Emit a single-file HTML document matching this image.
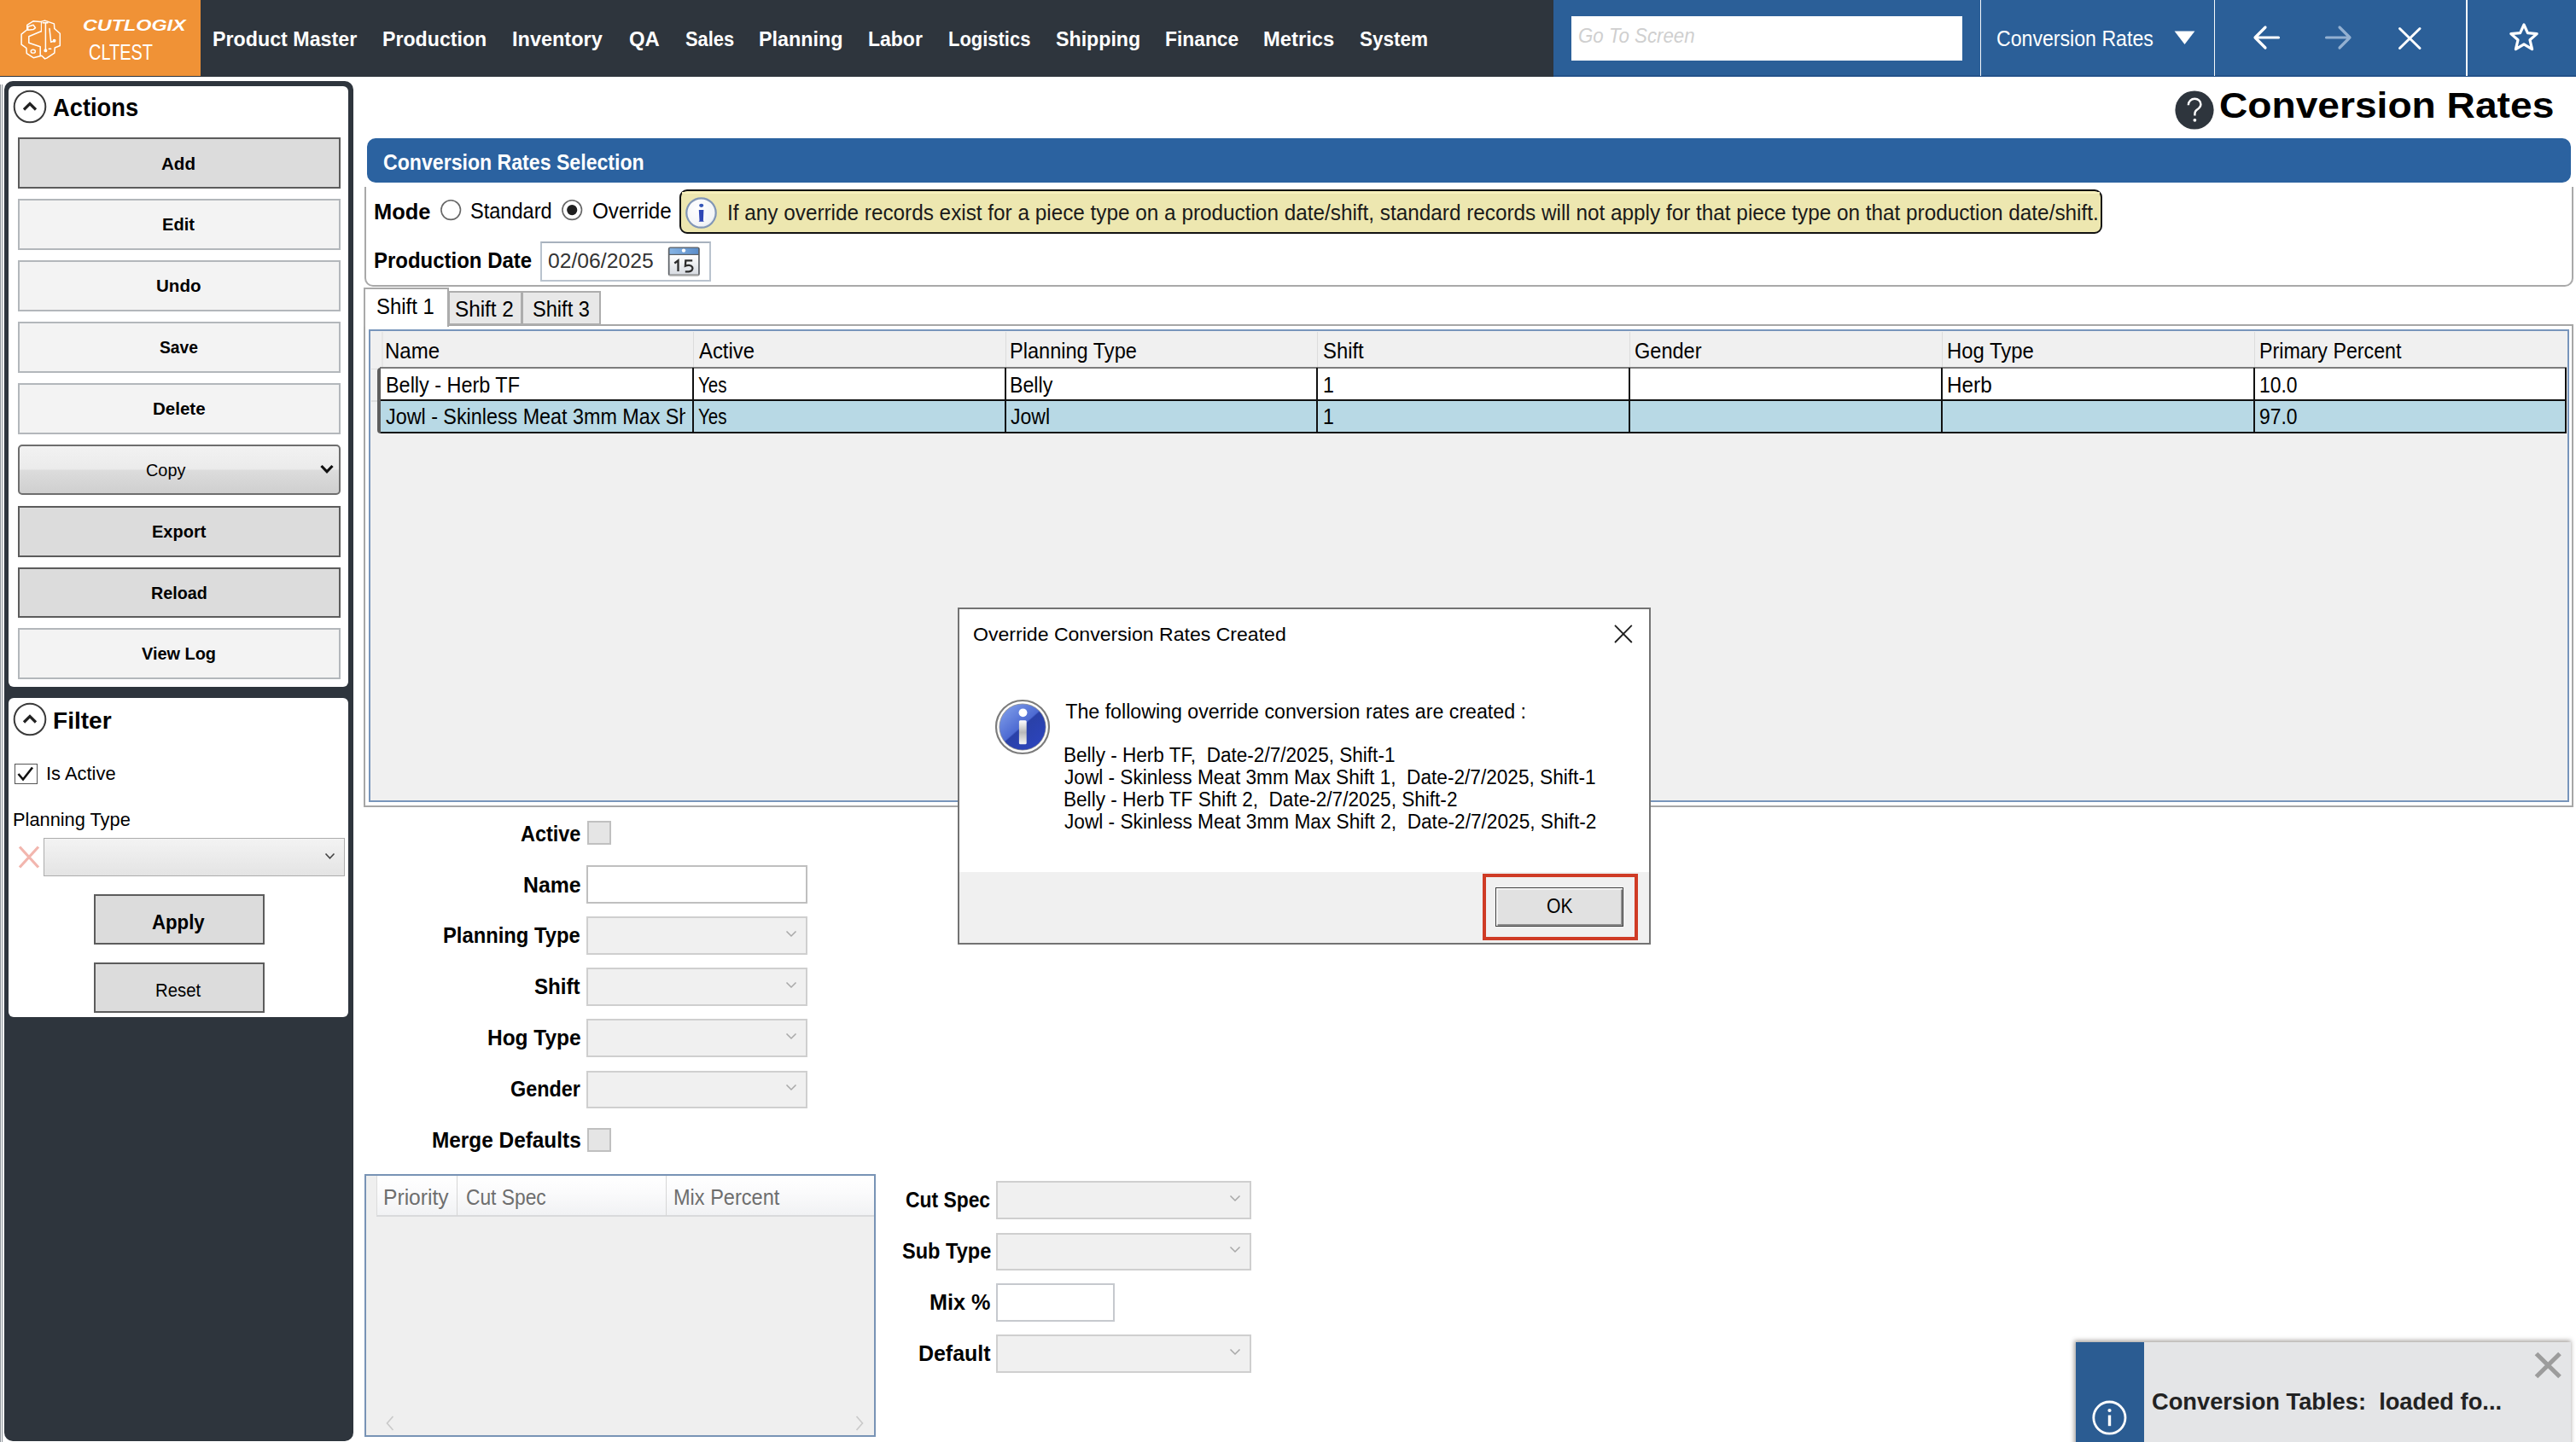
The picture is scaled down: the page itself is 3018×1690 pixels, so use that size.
<!DOCTYPE html>
<html><head><meta charset="utf-8"><title>Conversion Rates</title>
<style>
html,body{margin:0;padding:0;background:#fff;width:3018px;height:1690px;overflow:hidden;}
body{position:relative;font-family:"Liberation Sans",sans-serif;}
body>div,body>svg,div>div{position:absolute;}
.t{white-space:pre;transform-origin:0 0;}
</style></head><body>
<div style="left:0.00px;top:0.00px;width:3018.00px;height:90.00px;background:#2e353d;"></div>
<div style="left:0.00px;top:0.00px;width:235.00px;height:88.60px;background:#f09236;"></div>
<div style="left:1820.00px;top:0.00px;width:1198.00px;height:90.00px;background:#2b5f98;"></div>
<div style="left:1820.00px;top:88.30px;width:1198.00px;height:1.70px;background:#24528a;"></div>
<div style="left:1841.00px;top:19.00px;width:458.00px;height:51.50px;background:#fff;"></div>
<div style="left:2319.65px;top:0.00px;width:1.70px;height:88.50px;background:#f4f7fb;"></div>
<div style="left:2593.75px;top:0.00px;width:1.70px;height:88.50px;background:#f4f7fb;"></div>
<div style="left:2889.15px;top:0.00px;width:1.70px;height:88.50px;background:#f4f7fb;"></div>
<svg style="left:18px;top:16px" width="64" height="60" viewBox="0 0 64 60" fill="none" stroke="#fff" stroke-width="1.5" stroke-linejoin="round" stroke-linecap="round">
<path d="M21.2 8.7 L29.1 9.6 L34.5 8.1 L45.4 11.9 L45.8 17.5 L52.3 23.3 L52.3 37.5 L46.2 40 L45.8 46.2 L36.7 52.1 L34.6 52.9 L30.8 49.2 L21.2 51.7 L13.3 46.7 L12.9 40.4 L7.1 36.2 L7.1 24.2 L13.75 18.75 L13.75 13.3 Z"/>
<path d="M30 20.8 L15.8 26.7 L15.8 34.2 L29.2 38.75 L29.2 48.75"/>
<path d="M14.6 19.2 L14.8 15.2 L21 13.2 L23.5 16.6 L21.3 18.4 Z" fill="none" stroke-width="1.5"/>
<ellipse cx="20.8" cy="44.2" rx="2.6" ry="1.9" fill="none" stroke-width="1.4"/>
<path d="M35.4 10.8 L35.4 43.3 M32.1 10.8 L37.9 10.8"/>
<circle cx="35.4" cy="43.3" r="1.3" fill="#fff"/>
<path d="M30.4 10 L30.4 21" stroke-width="1.1"/>
<path d="M40 17.5 L41.7 33.3 L45.8 32.1"/>
<circle cx="45.6" cy="31.8" r="1.2" fill="#fff"/>
<path d="M39.2 41.25 L41.7 41.25"/>
</svg>
<div class="t" style="left:97.43px;top:21.00px;font-size:18.406px;line-height:18.406px;color:#fff;font-weight:bold;font-style:italic;transform:scaleX(1.2695);">CUTLOGIX</div>
<div class="t" style="left:103.92px;top:49.00px;font-size:25.652px;line-height:25.652px;color:#fff;transform:scaleX(0.7779);">CLTEST</div>
<div class="t" style="left:248.91px;top:34.00px;font-size:24.638px;line-height:24.638px;color:#fff;font-weight:bold;transform:scaleX(0.9441);">Product Master</div>
<div class="t" style="left:447.92px;top:34.00px;font-size:24.638px;line-height:24.638px;color:#fff;font-weight:bold;transform:scaleX(0.9409);">Production</div>
<div class="t" style="left:600.09px;top:34.00px;font-size:24.638px;line-height:24.638px;color:#fff;font-weight:bold;transform:scaleX(0.9541);">Inventory</div>
<div class="t" style="left:737.13px;top:34.00px;font-size:24.638px;line-height:24.638px;color:#fff;font-weight:bold;transform:scaleX(0.9686);">QA</div>
<div class="t" style="left:802.71px;top:34.00px;font-size:24.638px;line-height:24.638px;color:#fff;font-weight:bold;transform:scaleX(0.8889);">Sales</div>
<div class="t" style="left:889.10px;top:34.00px;font-size:24.638px;line-height:24.638px;color:#fff;font-weight:bold;transform:scaleX(0.9475);">Planning</div>
<div class="t" style="left:1016.83px;top:34.00px;font-size:24.638px;line-height:24.638px;color:#fff;font-weight:bold;transform:scaleX(0.9333);">Labor</div>
<div class="t" style="left:1111.12px;top:34.00px;font-size:24.638px;line-height:24.638px;color:#fff;font-weight:bold;transform:scaleX(0.8914);">Logistics</div>
<div class="t" style="left:1237.06px;top:34.00px;font-size:24.638px;line-height:24.638px;color:#fff;font-weight:bold;transform:scaleX(0.9417);">Shipping</div>
<div class="t" style="left:1364.75px;top:34.00px;font-size:24.638px;line-height:24.638px;color:#fff;font-weight:bold;transform:scaleX(0.9267);">Finance</div>
<div class="t" style="left:1480.07px;top:34.00px;font-size:24.638px;line-height:24.638px;color:#fff;font-weight:bold;transform:scaleX(0.9651);">Metrics</div>
<div class="t" style="left:1592.79px;top:34.00px;font-size:24.638px;line-height:24.638px;color:#fff;font-weight:bold;transform:scaleX(0.9129);">System</div>
<div class="t" style="left:1848.78px;top:30.00px;font-size:24.348px;line-height:24.348px;color:#cfcfcf;font-style:italic;transform:scaleX(0.9156);">Go To Screen</div>
<div class="t" style="left:2338.59px;top:33.00px;font-size:25.507px;line-height:25.507px;color:#fff;transform:scaleX(0.9070);">Conversion Rates</div>
<svg style="left:2547px;top:36px" width="26" height="17" viewBox="0 0 26 17"><path d="M0.6 0.6 L24.4 0.6 L12.5 16 Z" fill="#fff"/></svg>
<svg style="left:2636px;top:26px" width="40" height="36" viewBox="0 0 40 36" fill="none" stroke="#fff" stroke-width="3.2" stroke-linecap="round" stroke-linejoin="round">
<path d="M33.5 18 L6.5 18 M18 6 L6 18 L18 30"/></svg>
<svg style="left:2720px;top:26px" width="40" height="36" viewBox="0 0 40 36" fill="none" stroke="#93b0d1" stroke-width="3.2" stroke-linecap="round" stroke-linejoin="round">
<path d="M5.5 18 L33 18 M21 6 L33 18 L21 30"/></svg>
<svg style="left:2806px;top:28px" width="34" height="34" viewBox="0 0 34 34" fill="none" stroke="#fff" stroke-width="3.0" stroke-linecap="round">
<path d="M5.5 5.5 L29 28.5 M29 5.5 L5.5 28.5"/></svg>
<svg style="left:2934px;top:22px" width="46" height="42" viewBox="0 0 46 42" fill="none" stroke="#fff" stroke-width="3.2" stroke-linejoin="round">
<path d="M23 7 L27.4 16.6 L38.2 17.6 L30 24.8 L32.6 35.6 L23 29.8 L13.4 35.6 L16 24.8 L7.8 17.6 L18.6 16.6 Z"/></svg>
<div style="left:0.00px;top:99.00px;width:1.00px;height:1591.00px;background:#8d9399;"></div>
<div style="left:2.00px;top:99.00px;width:1.00px;height:1591.00px;background:#8d9399;"></div>
<div style="left:4.70px;top:94.60px;width:409.30px;height:1594.90px;background:#2e353d;border-radius:10px;"></div>
<div style="left:10.40px;top:100.50px;width:397.80px;height:704.50px;background:#fff;border-radius:6px;"></div>
<div style="left:10.40px;top:818.00px;width:397.80px;height:374.00px;background:#fff;border-radius:6px;"></div>
<svg style="left:13.3px;top:103.2px" width="44" height="44" viewBox="0 0 44 44" fill="none">
<circle cx="22" cy="22" r="18.3" stroke="#3a3a3a" stroke-width="2"/>
<path d="M15 25.5 L22 18.5 L29 25.5" stroke="#222" stroke-width="3.2" stroke-linejoin="miter"/></svg>
<div class="t" style="left:62.06px;top:112.00px;font-size:28.986px;line-height:28.986px;color:#000;font-weight:bold;transform:scaleX(0.9423);">Actions</div>
<div style="left:20.80px;top:161.00px;width:377.80px;height:59.50px;background:#dcdcdc;border:2px solid #5c5c5c;box-sizing:border-box;"></div>
<div class="t" style="left:189.49px;top:182.00px;font-size:20.290px;line-height:20.290px;color:#000;font-weight:bold;transform:scaleX(1.0135);">Add</div>
<div style="left:20.80px;top:233.00px;width:377.80px;height:59.50px;background:#f3f3f3;border:2px solid #b3b7bb;box-sizing:border-box;"></div>
<div class="t" style="left:190.41px;top:253.00px;font-size:20.290px;line-height:20.290px;color:#000;font-weight:bold;transform:scaleX(0.9892);">Edit</div>
<div style="left:20.80px;top:305.00px;width:377.80px;height:59.50px;background:#f3f3f3;border:2px solid #b3b7bb;box-sizing:border-box;"></div>
<div class="t" style="left:183.29px;top:325.00px;font-size:20.290px;line-height:20.290px;color:#000;font-weight:bold;transform:scaleX(1.0140);">Undo</div>
<div style="left:20.80px;top:377.00px;width:377.80px;height:59.50px;background:#f3f3f3;border:2px solid #b3b7bb;box-sizing:border-box;"></div>
<div class="t" style="left:186.85px;top:397.00px;font-size:20.290px;line-height:20.290px;color:#000;font-weight:bold;transform:scaleX(0.9500);">Save</div>
<div style="left:20.80px;top:449.00px;width:377.80px;height:59.50px;background:#f3f3f3;border:2px solid #b3b7bb;box-sizing:border-box;"></div>
<div class="t" style="left:178.99px;top:469.00px;font-size:20.290px;line-height:20.290px;color:#000;font-weight:bold;transform:scaleX(1.0119);">Delete</div>
<div style="left:20.80px;top:593.00px;width:377.80px;height:59.50px;background:#dcdcdc;border:2px solid #5c5c5c;box-sizing:border-box;"></div>
<div class="t" style="left:177.61px;top:613.00px;font-size:20.290px;line-height:20.290px;color:#000;font-weight:bold;transform:scaleX(0.9857);">Export</div>
<div style="left:20.80px;top:665.00px;width:377.80px;height:58.50px;background:#dcdcdc;border:2px solid #5c5c5c;box-sizing:border-box;"></div>
<div class="t" style="left:176.53px;top:685.00px;font-size:20.290px;line-height:20.290px;color:#000;font-weight:bold;transform:scaleX(0.9723);">Reload</div>
<div style="left:20.80px;top:736.00px;width:377.80px;height:59.50px;background:#f3f3f3;border:2px solid #b3b7bb;box-sizing:border-box;"></div>
<div class="t" style="left:166.40px;top:756.00px;font-size:20.290px;line-height:20.290px;color:#000;font-weight:bold;transform:scaleX(0.9816);">View Log</div>
<div style="left:20.80px;top:520.50px;width:377.80px;height:59.50px;border:2px solid #6e6e6e;box-sizing:border-box;border-radius:5px;background:linear-gradient(#f2f2f2 0%,#ebebeb 48%,#dcdcdc 52%,#cfcfcf 100%);"></div>
<div class="t" style="left:170.99px;top:542.00px;font-size:19.710px;line-height:19.710px;color:#000;transform:scaleX(1.0089);">Copy</div>
<svg style="left:375px;top:544px" width="16" height="12" viewBox="0 0 16 12"><path d="M1.5 2 L8 8.8 L14.5 2" fill="none" stroke="#111" stroke-width="3.2"/></svg>
<svg style="left:13.3px;top:821.0px" width="44" height="44" viewBox="0 0 44 44" fill="none">
<circle cx="22" cy="22" r="18.3" stroke="#3a3a3a" stroke-width="2"/>
<path d="M15 25.5 L22 18.5 L29 25.5" stroke="#222" stroke-width="3.2" stroke-linejoin="miter"/></svg>
<div class="t" style="left:61.79px;top:831.00px;font-size:27.971px;line-height:27.971px;color:#000;font-weight:bold;transform:scaleX(1.0030);">Filter</div>
<div style="left:16.60px;top:895.00px;width:27.20px;height:24.40px;background:#fff;border:1.6px solid #555;box-sizing:border-box;"></div>
<svg style="left:16px;top:894px" width="28" height="26" viewBox="0 0 28 26"><path d="M5.5 13 L11 19.5 L22 5.5" fill="none" stroke="#111" stroke-width="2.6"/></svg>
<div class="t" style="left:53.52px;top:896.00px;font-size:22.174px;line-height:22.174px;color:#000;transform:scaleX(0.9887);">Is Active</div>
<div class="t" style="left:15.23px;top:950.00px;font-size:22.174px;line-height:22.174px;color:#000;transform:scaleX(0.9839);">Planning Type</div>
<svg style="left:21px;top:990px" width="26" height="29" viewBox="0 0 26 29"><path d="M2 2.5 L24 26.5 M24 2.5 L2 26.5" stroke="#f2b6ae" stroke-width="3.2"/></svg>
<div style="left:50.80px;top:982.30px;width:353.20px;height:44.70px;border:1.6px solid #adadad;box-sizing:border-box;background:linear-gradient(#f3f3f3,#e4e4e4);"></div>
<svg style="left:380px;top:999px" width="13" height="9" viewBox="0 0 13 9"><path d="M1.5 1.5 L6.5 6.8 L11.5 1.5" fill="none" stroke="#444" stroke-width="1.6"/></svg>
<div style="left:110.40px;top:1048.00px;width:199.60px;height:59.00px;background:#dcdcdc;border:2px solid #5c5c5c;box-sizing:border-box;"></div>
<div class="t" style="left:178.08px;top:1069.00px;font-size:24.058px;line-height:24.058px;color:#000;font-weight:bold;transform:scaleX(0.9242);">Apply</div>
<div style="left:110.40px;top:1128.00px;width:199.60px;height:59.00px;background:#dcdcdc;border:2px solid #5c5c5c;box-sizing:border-box;"></div>
<div class="t" style="left:181.92px;top:1149.00px;font-size:22.899px;line-height:22.899px;color:#000;transform:scaleX(0.8897);">Reset</div>
<svg style="left:2548px;top:105.5px" width="46" height="46" viewBox="0 0 46 46">
<circle cx="23" cy="23" r="22.6" fill="#2e353d"/>
<path d="M15.8 17.2 C15.8 12.6 19.2 9.8 23.3 9.8 C27.4 9.8 30.4 12.6 30.4 16.3 C30.4 19.6 28.3 21 26 22.6 C24.1 23.9 23.4 25 23.4 27.6 L23.4 29.6" fill="none" stroke="#fff" stroke-width="2.4"/>
<circle cx="23.4" cy="34.8" r="1.9" fill="#fff"/></svg>
<div class="t" style="left:2600.43px;top:103.00px;font-size:42.464px;line-height:42.464px;color:#000;font-weight:bold;transform:scaleX(1.0868);">Conversion Rates</div>
<div style="left:430.00px;top:162.30px;width:2582.00px;height:51.60px;background:#2b62a0;border-radius:10px;"></div>
<div class="t" style="left:449.11px;top:177.00px;font-size:26.087px;line-height:26.087px;color:#fff;font-weight:bold;transform:scaleX(0.8863);">Conversion Rates Selection</div>
<div style="left:426.80px;top:214.00px;width:2588.40px;height:122.20px;border-left:2px solid #a9a9a9;border-right:2px solid #a9a9a9;border-bottom:2px solid #a9a9a9;border-radius:0 0 10px 10px;box-sizing:border-box;"></div>
<div style="left:426.00px;top:214.00px;width:2590.00px;height:4.50px;background:#fff;"></div>
<div class="t" style="left:437.65px;top:235.00px;font-size:26.087px;line-height:26.087px;color:#000;font-weight:bold;transform:scaleX(0.9754);">Mode</div>
<svg style="left:514px;top:232px" width="180" height="28" viewBox="0 0 180 28" fill="none">
<circle cx="14.2" cy="14.1" r="11.3" stroke="#666" stroke-width="1.6" fill="#fff"/>
<circle cx="156.2" cy="14.1" r="11.3" stroke="#666" stroke-width="1.6" fill="#fff"/>
<circle cx="156.2" cy="14.1" r="6.1" fill="#1e1e1e"/></svg>
<div class="t" style="left:551.08px;top:235.00px;font-size:25.652px;line-height:25.652px;color:#000;transform:scaleX(0.9186);">Standard</div>
<div class="t" style="left:694.06px;top:235.00px;font-size:25.652px;line-height:25.652px;color:#000;transform:scaleX(0.9427);">Override</div>
<div style="left:796.00px;top:222.40px;width:1667.40px;height:51.60px;background:#ede7b0;border:2px solid #111;box-sizing:border-box;border-radius:9px;"></div>
<div style="left:799.00px;top:225.00px;width:1661.40px;height:1.50px;background:#f8f1bd;"></div>
<svg style="left:801px;top:229px" width="40" height="40" viewBox="0 0 40 40">
<defs><radialGradient id="ig" cx="0.4" cy="0.35" r="0.7"><stop offset="0" stop-color="#ffffff"/><stop offset="0.8" stop-color="#f3f5f8"/><stop offset="1" stop-color="#dfe5ee"/></radialGradient></defs>
<circle cx="20.5" cy="20.5" r="17.2" fill="url(#ig)" stroke="#8196b6" stroke-width="2.2"/>
<ellipse cx="20.7" cy="11.8" rx="2.6" ry="2.1" fill="#3556b8"/>
<path d="M17.8 17 L23.4 17 L22.9 29.6 L23.8 30.8 L17.6 30.8 L18.5 29.6 Z" fill="#2f47b5"/></svg>
<div class="t" style="left:851.54px;top:236.00px;font-size:26.087px;line-height:26.087px;color:#1a1a1a;transform:scaleX(0.9322);">If any override records exist for a piece type on a production date/shift, standard records will not apply for that piece type on that production date/shift.</div>
<div class="t" style="left:437.71px;top:293.00px;font-size:25.362px;line-height:25.362px;color:#000;font-weight:bold;transform:scaleX(0.9451);">Production Date</div>
<div style="left:632.80px;top:283.00px;width:199.80px;height:46.80px;background:#fff;border:2px solid #b9c3ce;border-top-color:#a7b1bd;box-sizing:border-box;"></div>
<div class="t" style="left:642.40px;top:294.00px;font-size:24.638px;line-height:24.638px;color:#333;transform:scaleX(1.0033);">02/06/2025</div>
<svg style="left:781px;top:288px" width="41" height="38" viewBox="0 0 41 38">
<defs><linearGradient id="cb" x1="0" y1="0" x2="1" y2="0"><stop offset="0" stop-color="#86b4e4"/><stop offset="1" stop-color="#5b8dca"/></linearGradient>
<linearGradient id="cw" x1="0" y1="0" x2="0" y2="1"><stop offset="0" stop-color="#ffffff"/><stop offset="1" stop-color="#d8dce2"/></linearGradient></defs>
<rect x="1.8" y="1.6" width="37" height="33.6" rx="2.5" fill="#5b5f64"/>
<rect x="3.5" y="2.8" width="33.6" height="7" fill="url(#cb)"/>
<rect x="3.5" y="11" width="33.6" height="22.6" fill="url(#cw)"/>
<rect x="3" y="33.6" width="34.6" height="1.8" fill="#a5a5a5"/>
<circle cx="20" cy="5.6" r="2.2" fill="#fff"/>
<path d="M9.3 20.5 L13.5 17.3 L13.5 30" fill="none" stroke="#2d2d2d" stroke-width="2.3"/>
<path d="M30.2 17.4 L22.3 17.4 L21.9 23.6 C24.5 22.4 28.8 22.3 30.2 25.2 C31.4 28.1 28.6 30.5 25.5 30.3 L21.8 30.3" fill="none" stroke="#2d2d2d" stroke-width="2.3"/></svg>
<div style="left:426.40px;top:380.40px;width:2589.00px;height:565.60px;background:#fff;border:2px solid #a6a6a6;box-sizing:border-box;"></div>
<div style="left:426.40px;top:336.60px;width:99.40px;height:46.40px;background:#fff;border:2px solid #a9a9a9;border-bottom:none;box-sizing:border-box;"></div>
<div style="left:525.20px;top:340.60px;width:86.60px;height:40.80px;background:#e8e8e8;border:2px solid #adadad;box-sizing:border-box;"></div>
<div style="left:611.40px;top:340.60px;width:92.60px;height:40.80px;background:#e8e8e8;border:2px solid #adadad;box-sizing:border-box;"></div>
<div class="t" style="left:440.75px;top:347.00px;font-size:25.217px;line-height:25.217px;color:#000;transform:scaleX(0.9471);">Shift 1</div>
<div class="t" style="left:532.54px;top:350.00px;font-size:25.217px;line-height:25.217px;color:#000;transform:scaleX(0.9638);">Shift 2</div>
<div class="t" style="left:624.46px;top:350.00px;font-size:25.217px;line-height:25.217px;color:#000;transform:scaleX(0.9357);">Shift 3</div>
<div style="left:432.40px;top:386.40px;width:2577.20px;height:553.40px;background:#f0f0f0;border:2px solid #7895bb;box-sizing:border-box;"></div>
<div style="left:447.40px;top:389.00px;width:1.20px;height:41.00px;background:#e6e6e6;"></div>
<div style="left:435.00px;top:432.00px;width:7.40px;height:1.40px;background:#dedede;"></div>
<div style="left:435.00px;top:469.20px;width:7.40px;height:1.40px;background:#dedede;"></div>
<div style="left:811.70px;top:389.00px;width:1.20px;height:41.00px;background:#dcdcdc;"></div>
<div style="left:1177.50px;top:389.00px;width:1.20px;height:41.00px;background:#dcdcdc;"></div>
<div style="left:1543.30px;top:389.00px;width:1.20px;height:41.00px;background:#dcdcdc;"></div>
<div style="left:1909.10px;top:389.00px;width:1.20px;height:41.00px;background:#dcdcdc;"></div>
<div style="left:2274.90px;top:389.00px;width:1.20px;height:41.00px;background:#dcdcdc;"></div>
<div style="left:2640.70px;top:389.00px;width:1.20px;height:41.00px;background:#dcdcdc;"></div>
<div style="left:445.00px;top:429.60px;width:2561.60px;height:2.20px;background:#7c7c7c;"></div>
<div style="left:445.00px;top:431.50px;width:2561.00px;height:38.00px;background:#fff;"></div>
<div style="left:445.00px;top:469.50px;width:2561.00px;height:37.50px;background:#b8d9e5;"></div>
<div style="left:444.80px;top:468.20px;width:2561.80px;height:2.20px;background:#111;"></div>
<div style="left:444.80px;top:506.00px;width:2561.80px;height:2.40px;background:#111;"></div>
<div style="left:442.40px;top:430.60px;width:3.60px;height:77.60px;background:#5e5e5e;border-radius:4px 0 0 4px;"></div>
<div style="left:810.70px;top:431.00px;width:2.20px;height:76.00px;background:#111;"></div>
<div style="left:1176.50px;top:431.00px;width:2.20px;height:76.00px;background:#111;"></div>
<div style="left:1542.30px;top:431.00px;width:2.20px;height:76.00px;background:#111;"></div>
<div style="left:1908.10px;top:431.00px;width:2.20px;height:76.00px;background:#111;"></div>
<div style="left:2273.90px;top:431.00px;width:2.20px;height:76.00px;background:#111;"></div>
<div style="left:2639.70px;top:431.00px;width:2.20px;height:76.00px;background:#111;"></div>
<div style="left:3004.60px;top:431.00px;width:2.20px;height:77.00px;background:#111;"></div>
<div class="t" style="left:451.48px;top:399.00px;font-size:25.072px;line-height:25.072px;color:#000;transform:scaleX(0.9578);">Name</div>
<div class="t" style="left:818.60px;top:399.00px;font-size:25.072px;line-height:25.072px;color:#000;transform:scaleX(0.9507);">Active</div>
<div class="t" style="left:1183.22px;top:399.00px;font-size:25.072px;line-height:25.072px;color:#000;transform:scaleX(0.9397);">Planning Type</div>
<div class="t" style="left:1549.95px;top:399.00px;font-size:25.072px;line-height:25.072px;color:#000;transform:scaleX(0.9510);">Shift</div>
<div class="t" style="left:1915.46px;top:399.00px;font-size:25.072px;line-height:25.072px;color:#000;transform:scaleX(0.9390);">Gender</div>
<div class="t" style="left:2281.39px;top:399.00px;font-size:25.072px;line-height:25.072px;color:#000;transform:scaleX(0.9529);">Hog Type</div>
<div class="t" style="left:2646.55px;top:399.00px;font-size:25.072px;line-height:25.072px;color:#000;transform:scaleX(0.9264);">Primary Percent</div>
<div class="t" style="left:451.53px;top:439.00px;font-size:25.072px;line-height:25.072px;color:#000;transform:scaleX(0.9339);">Belly - Herb TF</div>
<div class="t" style="left:818.48px;top:439.00px;font-size:25.072px;line-height:25.072px;color:#000;transform:scaleX(0.8205);">Yes</div>
<div class="t" style="left:1183.25px;top:439.00px;font-size:25.072px;line-height:25.072px;color:#000;transform:scaleX(0.9250);">Belly</div>
<div class="t" style="left:1549.96px;top:439.00px;font-size:25.072px;line-height:25.072px;color:#000;transform:scaleX(0.9221);">1</div>
<div class="t" style="left:2281.36px;top:439.00px;font-size:25.072px;line-height:25.072px;color:#000;transform:scaleX(0.9692);">Herb</div>
<div class="t" style="left:2647.47px;top:439.00px;font-size:25.072px;line-height:25.072px;color:#000;transform:scaleX(0.9130);">10.0</div>
<div style="left:452.47px;top:476.00px;width:351.00px;height:27.58px;overflow:hidden"><div class="t" style="left:0.00px;top:0;font-size:25.072px;line-height:25.072px;color:#000;transform:scaleX(0.9304)">Jowl - Skinless Meat 3mm Max Shift 1</div></div>
<div class="t" style="left:818.48px;top:476.00px;font-size:25.072px;line-height:25.072px;color:#000;transform:scaleX(0.8205);">Yes</div>
<div class="t" style="left:1183.58px;top:476.00px;font-size:25.072px;line-height:25.072px;color:#000;transform:scaleX(0.9188);">Jowl</div>
<div class="t" style="left:1549.96px;top:476.00px;font-size:25.072px;line-height:25.072px;color:#000;transform:scaleX(0.9221);">1</div>
<div class="t" style="left:2647.49px;top:476.00px;font-size:25.072px;line-height:25.072px;color:#000;transform:scaleX(0.9128);">97.0</div>
<div class="t" style="left:609.78px;top:965.00px;font-size:25.507px;line-height:25.507px;color:#000;font-weight:bold;transform:scaleX(0.9200);">Active</div>
<div class="t" style="left:612.66px;top:1025.00px;font-size:25.507px;line-height:25.507px;color:#000;font-weight:bold;transform:scaleX(0.9716);">Name</div>
<div class="t" style="left:519.34px;top:1084.00px;font-size:25.507px;line-height:25.507px;color:#000;font-weight:bold;transform:scaleX(0.9324);">Planning Type</div>
<div class="t" style="left:625.75px;top:1144.00px;font-size:25.507px;line-height:25.507px;color:#000;font-weight:bold;transform:scaleX(0.9464);">Shift</div>
<div class="t" style="left:571.28px;top:1204.00px;font-size:25.507px;line-height:25.507px;color:#000;font-weight:bold;transform:scaleX(0.9595);">Hog Type</div>
<div class="t" style="left:598.08px;top:1264.00px;font-size:25.507px;line-height:25.507px;color:#000;font-weight:bold;transform:scaleX(0.9170);">Gender</div>
<div class="t" style="left:505.79px;top:1324.00px;font-size:25.507px;line-height:25.507px;color:#000;font-weight:bold;transform:scaleX(0.9556);">Merge Defaults</div>
<div style="left:688.40px;top:962.20px;width:27.80px;height:27.80px;background:#e5e5e5;border:2px solid #c0c0c0;box-sizing:border-box;"></div>
<div style="left:686.70px;top:1014.00px;width:259.30px;height:45.00px;background:#fff;border:2px solid #bfbfbf;box-sizing:border-box;"></div>
<div style="left:686.60px;top:1074.10px;width:259.20px;height:45.20px;background:#f0f0f0;border:2px solid #cfcfcf;box-sizing:border-box;"></div>
<svg style="left:919.8px;top:1089.7px" width="14" height="9" viewBox="0 0 14 9"><path d="M1.5 1.5 L7 7 L12.5 1.5" fill="none" stroke="#a8a8a8" stroke-width="1.5"/></svg>
<div style="left:686.60px;top:1134.30px;width:259.20px;height:44.90px;background:#f0f0f0;border:2px solid #cfcfcf;box-sizing:border-box;"></div>
<svg style="left:919.8px;top:1149.8px" width="14" height="9" viewBox="0 0 14 9"><path d="M1.5 1.5 L7 7 L12.5 1.5" fill="none" stroke="#a8a8a8" stroke-width="1.5"/></svg>
<div style="left:686.60px;top:1194.20px;width:259.20px;height:44.80px;background:#f0f0f0;border:2px solid #cfcfcf;box-sizing:border-box;"></div>
<svg style="left:919.8px;top:1209.6px" width="14" height="9" viewBox="0 0 14 9"><path d="M1.5 1.5 L7 7 L12.5 1.5" fill="none" stroke="#a8a8a8" stroke-width="1.5"/></svg>
<div style="left:686.60px;top:1254.50px;width:259.20px;height:44.40px;background:#f0f0f0;border:2px solid #cfcfcf;box-sizing:border-box;"></div>
<svg style="left:919.8px;top:1269.7px" width="14" height="9" viewBox="0 0 14 9"><path d="M1.5 1.5 L7 7 L12.5 1.5" fill="none" stroke="#a8a8a8" stroke-width="1.5"/></svg>
<div style="left:688.40px;top:1322.00px;width:27.80px;height:27.60px;background:#e5e5e5;border:2px solid #c0c0c0;box-sizing:border-box;"></div>
<div style="left:426.60px;top:1376.20px;width:599.00px;height:307.80px;background:#efefef;border:2px solid #7893b5;box-sizing:border-box;"></div>
<div style="left:428.60px;top:1378.20px;width:595.00px;height:46.30px;background:linear-gradient(#ffffff 0%,#fbfbfc 40%,#f1f2f4 100%);"></div>
<div style="left:428.60px;top:1378.20px;width:12.60px;height:46.30px;background:#efefef;"></div>
<div style="left:441.20px;top:1423.50px;width:582.40px;height:2.00px;background:#d9dadc;"></div>
<div style="left:440.60px;top:1378.20px;width:1.20px;height:46.80px;background:#dcdcdc;"></div>
<div style="left:534.80px;top:1378.20px;width:1.40px;height:46.80px;background:#d6d6d6;"></div>
<div style="left:779.60px;top:1378.20px;width:1.40px;height:46.80px;background:#d6d6d6;"></div>
<div class="t" style="left:449.41px;top:1390.00px;font-size:26.087px;line-height:26.087px;color:#6e6e6e;transform:scaleX(0.9443);">Priority</div>
<div class="t" style="left:545.53px;top:1390.00px;font-size:26.087px;line-height:26.087px;color:#6e6e6e;transform:scaleX(0.8736);">Cut Spec</div>
<div class="t" style="left:788.79px;top:1390.00px;font-size:26.087px;line-height:26.087px;color:#6e6e6e;transform:scaleX(0.9029);">Mix Percent</div>
<svg style="left:450px;top:1658px" width="14" height="20" viewBox="0 0 14 20"><path d="M10.5 2 L3.5 10 L10.5 18" fill="none" stroke="#c9c9c9" stroke-width="1.6"/></svg>
<svg style="left:1000px;top:1658px" width="14" height="20" viewBox="0 0 14 20"><path d="M3.5 2 L10.5 10 L3.5 18" fill="none" stroke="#c9c9c9" stroke-width="1.6"/></svg>
<div class="t" style="left:1061.40px;top:1394.00px;font-size:25.507px;line-height:25.507px;color:#000;font-weight:bold;transform:scaleX(0.8963);">Cut Spec</div>
<div class="t" style="left:1056.58px;top:1454.00px;font-size:25.507px;line-height:25.507px;color:#000;font-weight:bold;transform:scaleX(0.9234);">Sub Type</div>
<div class="t" style="left:1088.93px;top:1514.00px;font-size:25.507px;line-height:25.507px;color:#000;font-weight:bold;transform:scaleX(0.9871);">Mix %</div>
<div class="t" style="left:1075.95px;top:1574.00px;font-size:25.507px;line-height:25.507px;color:#000;font-weight:bold;transform:scaleX(0.9774);">Default</div>
<div style="left:1166.60px;top:1384.30px;width:299.20px;height:44.70px;background:#f0f0f0;border:2px solid #cfcfcf;box-sizing:border-box;"></div>
<svg style="left:1439.8px;top:1399.7px" width="14" height="9" viewBox="0 0 14 9"><path d="M1.5 1.5 L7 7 L12.5 1.5" fill="none" stroke="#a8a8a8" stroke-width="1.5"/></svg>
<div style="left:1166.60px;top:1444.50px;width:299.20px;height:44.30px;background:#f0f0f0;border:2px solid #cfcfcf;box-sizing:border-box;"></div>
<svg style="left:1439.8px;top:1459.7px" width="14" height="9" viewBox="0 0 14 9"><path d="M1.5 1.5 L7 7 L12.5 1.5" fill="none" stroke="#a8a8a8" stroke-width="1.5"/></svg>
<div style="left:1166.60px;top:1564.30px;width:299.20px;height:44.90px;background:#f0f0f0;border:2px solid #cfcfcf;box-sizing:border-box;"></div>
<svg style="left:1439.8px;top:1579.8px" width="14" height="9" viewBox="0 0 14 9"><path d="M1.5 1.5 L7 7 L12.5 1.5" fill="none" stroke="#a8a8a8" stroke-width="1.5"/></svg>
<div style="left:1166.60px;top:1504.30px;width:139.20px;height:44.50px;background:#fff;border:2px solid #c6c9ce;box-sizing:border-box;"></div>
<div style="left:1122.40px;top:712.00px;width:811.80px;height:395.00px;background:#fff;border:2px solid #737373;box-sizing:border-box;"></div>
<div style="left:1124.40px;top:1021.80px;width:807.80px;height:83.20px;background:#f0f0f0;"></div>
<div class="t" style="left:1140.19px;top:732.00px;font-size:22.899px;line-height:22.899px;color:#000;transform:scaleX(1.0086);">Override Conversion Rates Created</div>
<svg style="left:1889px;top:730px" width="26" height="26" viewBox="0 0 26 26"><path d="M3 2.8 L22.8 23 M22.8 2.8 L3 23" stroke="#1e1e1e" stroke-width="1.8"/></svg>
<svg style="left:1164px;top:818px" width="68" height="68" viewBox="0 0 68 68">
<defs><linearGradient id="dg" x1="0.15" y1="0.1" x2="0.85" y2="0.9"><stop offset="0" stop-color="#7896e6"/><stop offset="0.47" stop-color="#4d6ad2"/><stop offset="0.5" stop-color="#2a41a8"/><stop offset="1" stop-color="#2c44bc"/></linearGradient>
<linearGradient id="ds" x1="0" y1="0" x2="0" y2="1"><stop offset="0" stop-color="#ffffff"/><stop offset="0.5" stop-color="#b9b9b9"/><stop offset="1" stop-color="#f5f5f5"/></linearGradient></defs>
<circle cx="34" cy="34" r="31" fill="none" stroke="#7c7c7c" stroke-width="2.2"/>
<circle cx="34" cy="34" r="29" fill="#fff"/>
<circle cx="34" cy="34" r="27.6" fill="#9a9a9a"/>
<circle cx="34" cy="34" r="26.8" fill="url(#dg)"/>
<circle cx="34.5" cy="17.3" r="4.9" fill="#fff"/>
<rect x="29.9" y="26.2" width="8.8" height="28.1" rx="1.5" fill="url(#ds)"/></svg>
<div class="t" style="left:1248.30px;top:823.00px;font-size:23.188px;line-height:23.188px;color:#000;">The following override conversion rates are created :</div>
<div class="t" style="left:1246.35px;top:874.00px;font-size:23.188px;line-height:23.188px;color:#000;transform:scaleX(0.9740);">Belly - Herb TF,  Date-2/7/2025, Shift-1</div>
<div class="t" style="left:1247.32px;top:900.00px;font-size:23.188px;line-height:23.188px;color:#000;transform:scaleX(0.9765);">Jowl - Skinless Meat 3mm Max Shift 1,  Date-2/7/2025, Shift-1</div>
<div class="t" style="left:1246.35px;top:926.00px;font-size:23.188px;line-height:23.188px;color:#000;transform:scaleX(0.9745);">Belly - Herb TF Shift 2,  Date-2/7/2025, Shift-2</div>
<div class="t" style="left:1247.32px;top:952.00px;font-size:23.188px;line-height:23.188px;color:#000;transform:scaleX(0.9778);">Jowl - Skinless Meat 3mm Max Shift 2,  Date-2/7/2025, Shift-2</div>
<div style="left:1736.50px;top:1023.80px;width:182.10px;height:78.20px;border:4.2px solid #cf3b25;box-sizing:border-box;"></div>
<div style="left:1751.90px;top:1040.10px;width:150.10px;height:45.90px;background:#e1e1e1;border:1.5px solid #3c3c3c;box-shadow:inset 1.5px 1.5px 0 #fdfdfd, inset -2px -2px 0 #8c8c8c;box-sizing:border-box;"></div>
<div class="t" style="left:1812.09px;top:1051.00px;font-size:23.188px;line-height:23.188px;color:#000;transform:scaleX(0.9125);">OK</div>
<div style="left:2431.80px;top:1573.20px;width:580.60px;height:126.80px;background:#e4e5e7;box-shadow:-1px -1px 5px 1px rgba(60,50,45,0.45);"></div>
<div style="left:2431.80px;top:1573.20px;width:79.80px;height:126.80px;background:#2b5c92;"></div>
<svg style="left:2449px;top:1639px" width="46" height="46" viewBox="0 0 46 46" fill="none">
<circle cx="22.4" cy="22.6" r="18.6" stroke="#fff" stroke-width="2.8"/>
<rect x="20.8" y="19.6" width="3.4" height="12.6" fill="#fff"/>
<circle cx="22.5" cy="14" r="2.1" fill="#fff"/></svg>
<div class="t" style="left:2521.42px;top:1629.00px;font-size:27.826px;line-height:27.826px;color:#222;font-weight:bold;transform:scaleX(0.9803);">Conversion Tables:  loaded fo...</div>
<svg style="left:2966px;top:1581px" width="38" height="38" viewBox="0 0 38 38"><path d="M5.5 5.5 L33 32.5 M33 5.5 L5.5 32.5" stroke="#9c9c9c" stroke-width="5.2"/></svg>
</body></html>
